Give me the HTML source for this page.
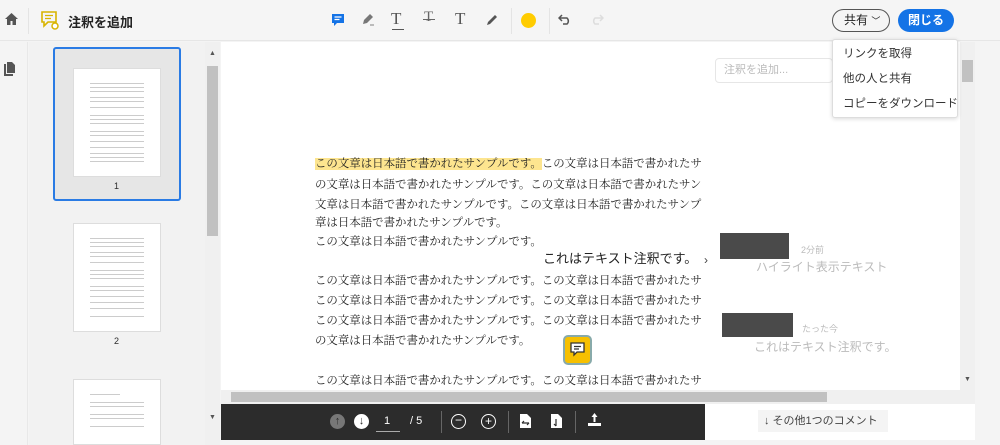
<!DOCTYPE html><html><head><meta charset="utf-8"><style>
*{margin:0;padding:0;box-sizing:border-box}
body{width:1000px;height:445px;overflow:hidden;background:#f4f4f4;font-family:"Liberation Sans","Noto Sans CJK JP",sans-serif;position:relative;color:#2c2c2c}
.a{position:absolute}
.doc{font-family:"Liberation Serif","Noto Serif CJK JP",serif;font-size:11.45px;letter-spacing:0;color:#222;white-space:nowrap;overflow:hidden;width:392px;left:315px;line-height:18px}
.doc .h{background:#fde58f}
.thumb{background:#fff;border:1px solid #ddd}
.tl{position:absolute;left:16px;right:16px;height:1px;background:#ccc}
.menu div{height:25px;line-height:25px;padding-left:10px;font-size:11.5px;color:#333;white-space:nowrap}
</style></head><body>
<div class="a" style="left:0;top:0;width:1000px;height:41px;background:#f5f5f5;border-bottom:1px solid #e6e6e6"></div>
<svg class="a" style="left:5px;top:13px" width="13" height="12" viewBox="0 0 13 12"><path d="M6.5 0L0 6h2v6h3.5V8h2v4H11V6h2z" fill="#555"/></svg>
<div class="a" style="left:28px;top:8px;width:1px;height:26px;background:#e4e4e4"></div>
<svg class="a" style="left:41px;top:11px" width="18" height="19" viewBox="0 0 18 19"><path d="M1 1h14v10H7l-4 4v-4H1z" fill="none" stroke="#d8b400" stroke-width="1.6"/><path d="M4 4.5h8M4 7.5h6" stroke="#d8b400" stroke-width="1.3"/><circle cx="14" cy="15" r="3" fill="#fff" stroke="#d8b400" stroke-width="1.5"/></svg>
<div class="a" style="left:68px;top:12px;font-size:13px;font-weight:bold;color:#222">注釈を追加</div>
<svg class="a" style="left:331px;top:13px" width="14" height="15" viewBox="0 0 14 15"><path d="M1 1h12v9H6l-3 3v-3H1z" fill="#1473e6"/><path d="M3.5 4h7M3.5 6.5h5" stroke="#fff" stroke-width="1.2"/></svg>
<svg class="a" style="left:361px;top:13px" width="14" height="14" viewBox="0 0 14 14"><path d="M2 11l1-4 6-6 3 3-6 6z" fill="#777"/><rect x="9" y="11" width="4" height="2" fill="#bbb"/></svg>
<div class="a" style="left:391px;top:9px;font-family:'Liberation Serif',serif;font-size:17px;color:#555">T</div><div class="a" style="left:392px;top:29px;width:12px;height:1px;background:#555"></div>
<div class="a" style="left:424px;top:9px;font-family:'Liberation Serif',serif;font-size:15px;color:#666">T</div><div class="a" style="left:423px;top:19px;width:12px;height:1px;background:#666"></div>
<div class="a" style="left:455px;top:9px;font-family:'Liberation Serif',serif;font-size:17px;color:#555">T</div>
<svg class="a" style="left:486px;top:13px" width="13" height="13" viewBox="0 0 13 13"><path d="M1 12l1-3 7-7 2 2-7 7z" fill="#555"/></svg>
<div class="a" style="left:511px;top:8px;width:1px;height:26px;background:#e4e4e4"></div>
<div class="a" style="left:521px;top:13px;width:15px;height:15px;border-radius:50%;background:#ffcc00"></div>
<div class="a" style="left:549px;top:8px;width:1px;height:26px;background:#e4e4e4"></div>
<svg class="a" style="left:558px;top:14px" width="14" height="11" viewBox="0 0 14 11"><path d="M4 1L1 4l3 3M1 4h8a4 4 0 010 6H5" fill="none" stroke="#555" stroke-width="1.5"/></svg>
<svg class="a" style="left:590px;top:14px" width="14" height="11" viewBox="0 0 14 11"><path d="M10 1l3 3-3 3M13 4H5a4 4 0 000 6h4" fill="none" stroke="#ddd" stroke-width="1.5"/></svg>
<div class="a" style="left:832px;top:9px;width:58px;height:23px;border:1.5px solid #555;border-radius:12px;font-size:12px;line-height:20px;padding-left:11px;color:#222">共有 <span style="font-size:9px">﹀</span></div>
<div class="a" style="left:898px;top:9px;width:56px;height:23px;background:#1473e6;border-radius:12px;font-size:12px;font-weight:bold;line-height:23px;text-align:center;color:#fff">閉じる</div>
<div class="a" style="left:0;top:42px;width:28px;height:403px;background:#f4f4f4;border-right:1px solid #e8e8e8"></div>
<svg class="a" style="left:4px;top:62px" width="11" height="14" viewBox="0 0 11 14"><path d="M0 2h2v10h7v2H0z M3 0h5l3 3v8H3z" fill="#555"/></svg>
<div class="a" style="left:29px;top:42px;width:176px;height:403px;background:#f2f2f2"></div>
<div class="a" style="left:53px;top:47px;width:128px;height:154px;background:#e6e6e6;border:2px solid #2a7be4;border-radius:3px"></div>
<div class="a thumb" style="left:73px;top:68px;width:88px;height:109px">
<div class="tl" style="top:14px"></div><div class="tl" style="top:18px"></div><div class="tl" style="top:22px"></div><div class="tl" style="top:28px"></div><div class="tl" style="top:32px"></div><div class="tl" style="top:38px"></div><div class="tl" style="top:46px"></div><div class="tl" style="top:50px"></div><div class="tl" style="top:54px"></div><div class="tl" style="top:62px"></div><div class="tl" style="top:66px"></div><div class="tl" style="top:72px"></div><div class="tl" style="top:78px"></div><div class="tl" style="top:84px"></div><div class="tl" style="top:88px"></div><div class="tl" style="top:92px"></div></div>
<div class="a" style="left:114px;top:181px;font-size:9px">1</div>
<div class="a thumb" style="left:73px;top:223px;width:88px;height:109px">
<div class="tl" style="top:14px"></div><div class="tl" style="top:18px"></div><div class="tl" style="top:22px"></div><div class="tl" style="top:28px"></div><div class="tl" style="top:32px"></div><div class="tl" style="top:38px"></div><div class="tl" style="top:46px"></div><div class="tl" style="top:50px"></div><div class="tl" style="top:54px"></div><div class="tl" style="top:62px"></div><div class="tl" style="top:66px"></div><div class="tl" style="top:72px"></div><div class="tl" style="top:78px"></div><div class="tl" style="top:84px"></div><div class="tl" style="top:92px"></div></div>
<div class="a" style="left:114px;top:336px;font-size:9px">2</div>
<div class="a thumb" style="left:73px;top:379px;width:88px;height:66px">
<div class="tl" style="top:14px;right:40px"></div><div class="tl" style="top:22px"></div><div class="tl" style="top:26px"></div><div class="tl" style="top:34px"></div><div class="tl" style="top:38px"></div><div class="tl" style="top:46px"></div></div>
<div class="a" style="left:205px;top:42px;width:15px;height:403px;background:#f0f0f0"></div>
<div class="a" style="left:207px;top:66px;width:11px;height:170px;background:#c1c1c1"></div>
<div class="a" style="left:209px;top:50px;font-size:7px;color:#555">▲</div>
<div class="a" style="left:209px;top:414px;font-size:7px;color:#555">▼</div>
<div class="a" style="left:221px;top:42px;width:739px;height:348px;background:#fff"></div>
<div class="a doc" style="top:155px"><span class="h">この文章は日本語で書かれたサンプルです。</span>この文章は日本語で書かれたサ</div>
<div class="a doc" style="top:176px">の文章は日本語で書かれたサンプルです。この文章は日本語で書かれたサン</div>
<div class="a doc" style="top:196px">文章は日本語で書かれたサンプルです。この文章は日本語で書かれたサンプ</div>
<div class="a doc" style="top:214px">章は日本語で書かれたサンプルです。</div>
<div class="a doc" style="top:233px">この文章は日本語で書かれたサンプルです。</div>
<div class="a" style="left:543px;top:248px;font-size:13px;color:#222">これはテキスト注釈です。</div>
<div class="a" style="left:704px;top:253px;font-size:12px;color:#444">›</div>
<div class="a doc" style="top:272px">この文章は日本語で書かれたサンプルです。この文章は日本語で書かれたサ</div>
<div class="a doc" style="top:292px">この文章は日本語で書かれたサンプルです。この文章は日本語で書かれたサ</div>
<div class="a doc" style="top:312px">この文章は日本語で書かれたサンプルです。この文章は日本語で書かれたサ</div>
<div class="a doc" style="top:332px">の文章は日本語で書かれたサンプルです。</div>
<div class="a doc" style="top:372px">この文章は日本語で書かれたサンプルです。この文章は日本語で書かれたサ</div>
<div class="a" style="left:563px;top:335px;width:29px;height:30px;background:#f7c000;border:2px solid #8aa;border-radius:5px"></div>
<svg class="a" style="left:569px;top:341px" width="17" height="17" viewBox="0 0 17 17"><path d="M2 2h13v9H8l-3 3v-3H2z" fill="#fff" stroke="#333" stroke-width="1.3"/><path d="M5 5.5h7M5 8h5" stroke="#333" stroke-width="1.2"/></svg>
<div class="a" style="left:715px;top:58px;width:118px;height:25px;border:1px solid #e6e6e6;border-radius:4px;font-size:11px;line-height:23px;padding-left:8px;color:#bbb">注釈を追加...</div>
<div class="a" style="left:720px;top:233px;width:69px;height:26px;background:#4a4a4a"></div>
<div class="a" style="left:801px;top:243px;font-size:9px;color:#bbb">2分前</div>
<div class="a" style="left:756px;top:258px;font-size:12px;color:#bbb">ハイライト表示テキスト</div>
<div class="a" style="left:722px;top:313px;width:71px;height:24px;background:#4a4a4a"></div>
<div class="a" style="left:802px;top:322px;font-size:9px;color:#bbb">たった今</div>
<div class="a" style="left:754px;top:338px;font-size:12px;color:#bbb">これはテキスト注釈です。</div>
<div class="a" style="left:960px;top:42px;width:15px;height:348px;background:#f0f0f0"></div>
<div class="a" style="left:962px;top:60px;width:11px;height:22px;background:#c1c1c1"></div>
<div class="a" style="left:964px;top:376px;font-size:7px;color:#555">▼</div>
<div class="a" style="left:221px;top:390px;width:754px;height:14px;background:#f0f0f0"></div>
<div class="a" style="left:231px;top:392px;width:596px;height:10px;background:#c1c1c1"></div>
<div class="a" style="left:221px;top:404px;width:484px;height:36px;background:#2c2c2c"></div>
<div class="a" style="left:330px;top:414px;width:15px;height:15px;border-radius:50%;background:#777;color:#2c2c2c;font-size:11px;line-height:15px;text-align:center;font-weight:bold">↑</div>
<div class="a" style="left:354px;top:414px;width:15px;height:15px;border-radius:50%;background:#fff;color:#2c2c2c;font-size:11px;line-height:15px;text-align:center;font-weight:bold">↓</div>
<div class="a" style="left:384px;top:415px;font-size:11px;color:#fff">1</div>
<div class="a" style="left:376px;top:431px;width:24px;height:1px;background:#aaa"></div>
<div class="a" style="left:410px;top:415px;font-size:11px;color:#fff">/ 5</div>
<div class="a" style="left:441px;top:411px;width:1px;height:22px;background:#666"></div>
<div class="a" style="left:451px;top:414px;width:15px;height:15px;border-radius:50%;border:1.5px solid #fff;color:#fff;font-size:12px;line-height:11px;text-align:center">−</div>
<div class="a" style="left:481px;top:414px;width:15px;height:15px;border-radius:50%;border:1.5px solid #fff;color:#fff;font-size:12px;line-height:12px;text-align:center">+</div>
<div class="a" style="left:508px;top:411px;width:1px;height:22px;background:#666"></div>
<svg class="a" style="left:520px;top:414px" width="11" height="14" viewBox="0 0 11 14"><path d="M0 0h7l4 4v10H0z" fill="#fff"/><path d="M2 9h7M2 9l2-2M9 9l-2 2" stroke="#2c2c2c" stroke-width="1.2"/></svg>
<svg class="a" style="left:551px;top:414px" width="11" height="14" viewBox="0 0 11 14"><path d="M0 0h7l4 4v10H0z" fill="#fff"/><path d="M5 5v7M5 12l-2-2" stroke="#2c2c2c" stroke-width="1.2"/></svg>
<div class="a" style="left:575px;top:411px;width:1px;height:22px;background:#666"></div>
<svg class="a" style="left:588px;top:413px" width="13" height="14" viewBox="0 0 13 14"><path d="M6.5 0l-3 4h2v5h2V4h2z" fill="#fff"/><rect x="0" y="10" width="13" height="3" fill="#fff"/></svg>
<div class="a" style="left:705px;top:404px;width:270px;height:36px;background:#fff"></div>
<div class="a" style="left:758px;top:410px;width:130px;height:22px;background:#f4f4f4;font-size:11px;line-height:22px;padding-left:6px;color:#444">↓ その他1つのコメント</div>
<div class="a menu" style="left:832px;top:39px;width:126px;height:79px;background:#fff;border:1px solid #ddd;border-radius:3px;box-shadow:0 1px 4px rgba(0,0,0,.15);padding-top:2px">
<div>リンクを取得</div><div>他の人と共有</div><div>コピーをダウンロード</div></div>
</body></html>
